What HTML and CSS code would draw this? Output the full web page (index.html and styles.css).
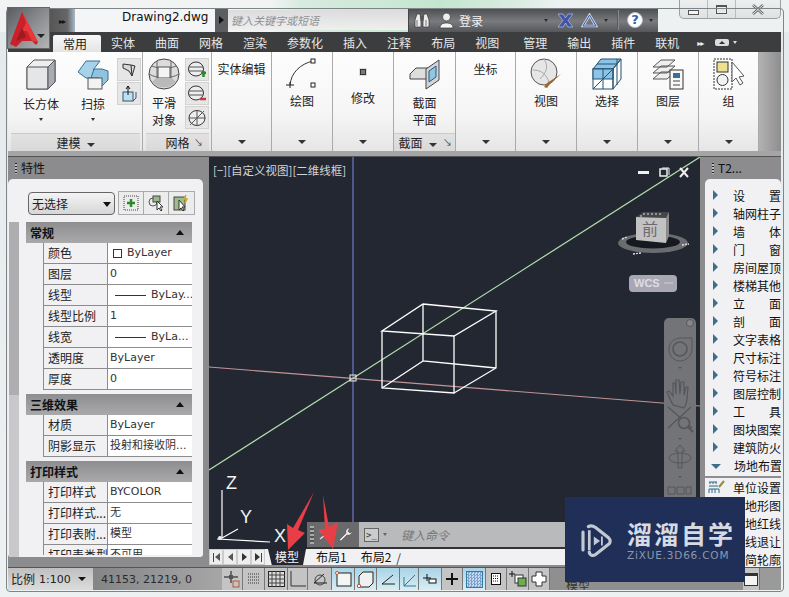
FILE: index.html
```html
<!DOCTYPE html>
<html lang="zh">
<head>
<meta charset="utf-8">
<title>Drawing2.dwg</title>
<link rel="stylesheet" href="styles.css">
</head>
<body>
<div class="window">
  <header class="titlebar">
    <div class="qat"><span class="dbl">▸▸</span></div>
    <div class="doc">Drawing2.dwg</div>
    <div class="expand"><span class="rtri"></span></div>
    <div class="search">键入关键字或短语</div>
    <div class="infobar">
      <svg class="ib-bino" width="16" height="17" viewBox="0 0 16 17"><path d="M1 15V8l2-6h3l1 6v7zM9 15V8l1-6h3l2 6v7z" fill="#ececec" stroke="#333" stroke-width=".7"/><path d="M3 8v6M12 8v6" stroke="#777"/><rect x="6.500" y="4" width="3" height="5" fill="#555"/></svg>
      <svg class="ib-user" width="15" height="17" viewBox="0 0 15 17"><circle cx="7.500" cy="5" r="4" fill="#eee" stroke="#333" stroke-width=".7"/><path d="M1 16c0-4 3-5 6.500-5s6.500 1 6.500 5z" fill="#f4f4f4" stroke="#333" stroke-width=".7"/></svg>
      <span class="login">登录</span>
      <span class="caret small-dark c1"></span>
      <svg class="ib-x" width="15" height="15" viewBox="0 0 15 15"><path d="M0 1h5l2.500 4L10 1h5l-5 6.500 5 6.500h-5L7.500 10 5 14H0l5-6.500z" fill="#3f54a8" stroke="#c8d0ee" stroke-width=".6"/></svg>
      <svg class="ib-a" width="17" height="15" viewBox="0 0 17 15"><path d="M8.500 2L15 13H2z" fill="none" stroke="#c9d4ea" stroke-width="2.600"/><path d="M8.500 2L15 13H2z" fill="none" stroke="#3c5aa8" stroke-width="1"/></svg>
      <span class="caret small-dark c2"></span>
      <span class="ib-sep"></span>
      <span class="help">?</span>
      <span class="caret small-dark c3"></span>
    </div>
    <div class="titlefill"></div>
    <div class="winbtns">
      <div class="winbtn"><span class="wb-min"></span></div>
      <div class="winbtn"><span class="wb-max"></span></div>
      <div class="winbtn wide"><svg width="12" height="11" viewBox="0 0 12 11"><path d="M1 1l10 9M11 1L1 10" stroke="#666" stroke-width="2.600"/><path d="M1 1l10 9M11 1L1 10" stroke="#eee" stroke-width="1"/></svg></div>
    </div>
  </header>

  <nav class="tabs">
    <span class="tab active">常用</span><span class="tab">实体</span><span class="tab">曲面</span><span class="tab">网格</span><span class="tab">渲染</span><span class="tab">参数化</span><span class="tab">插入</span><span class="tab">注释</span><span class="tab">布局</span><span class="tab">视图</span><span class="tab gap">管理</span><span class="tab">输出</span><span class="tab">插件</span><span class="tab">联机</span>
    <span class="tab-more">▸▸</span><span class="tab-mini"><i></i></span><span class="caret small-white"></span>
  </nav>

  <section class="ribbon">
    <div class="panel">
      <div class="pbody row-tools">
        <div class="tool">
          <svg width="32" height="32" viewBox="0 0 32 32"><path d="M2 9l7-7h21v22l-7 7H2z" fill="#eceef0" stroke="#555"/><path d="M2 9h21v22H2z" fill="#e4e6e8" stroke="#555"/><path d="M23 9l7-7v22l-7 7z" fill="#a9adb3" stroke="#555"/></svg>
          <span class="tlabel">长方体</span><span class="caret tiny"></span>
        </div>
        <div class="tool">
          <svg width="32" height="32" viewBox="0 0 32 32"><path d="M1 14l8-11h14l-7 9h3l-5 8H9z" fill="#a7d3ea" stroke="#3d6f8c"/><path d="M17 11h8l6 2v9l-6 6h-3v-8h-8z" fill="#8fc4e0" stroke="#3d6f8c"/><rect x="11" y="20" width="14" height="11" fill="#f2f2f2" stroke="#555"/></svg>
          <span class="tlabel">扫掠</span><span class="caret tiny"></span>
        </div>
        <div class="smalls">
          <div class="sbtn"><svg width="16" height="16" viewBox="0 0 16 16"><path d="M2 2l8 1 4 1-3 10-3-5-6-3z" fill="#d8d8d8" stroke="#333"/><path d="M10 3l1 11" stroke="#333"/></svg></div>
          <div class="sbtn"><svg width="18" height="18" viewBox="0 0 18 18"><rect x="3" y="7" width="10" height="9" fill="#bfe0ef" stroke="#357"/><path d="M8 1v9M6 4l2-3 2 3" stroke="#111" fill="none"/><path d="M13 16l3-3V7" stroke="#357" fill="none"/></svg></div>
        </div>
      </div>
      <div class="pfoot">建模<span class="caret foot"></span></div>
    </div>

    <div class="panel">
      <div class="pbody row-tools mesh">
        <div class="tool narrow">
          <svg width="32" height="32" viewBox="0 0 32 32"><circle cx="16" cy="16" r="15" fill="#dcdcdc" stroke="#444"/><path d="M1 16c8 5 22 5 30 0M9 3v22M23 3v22M4 8c7 3 17 3 24 0" fill="none" stroke="#666"/><rect x="10" y="9" width="12" height="11" fill="#f4f4f4" stroke="#555"/><path d="M4 24c6 7 18 7 24 0l-4-4H8z" fill="#b9b9b9"/></svg>
          <span class="tlabel two">平滑</span><span class="tlabel two">对象</span>
        </div>
        <div class="smalls three">
          <div class="sbtn"><svg width="20" height="20" viewBox="0 0 20 20"><ellipse cx="9" cy="9" rx="7.500" ry="7" fill="#eee" stroke="#333"/><path d="M2 7h14M2 11h14" stroke="#555"/><path d="M14 13h5M16.500 11v6" stroke="#2a8a2a" stroke-width="2.500"/></svg></div>
          <div class="sbtn"><svg width="20" height="20" viewBox="0 0 20 20"><ellipse cx="9" cy="9" rx="7.500" ry="7" fill="#eee" stroke="#333"/><path d="M2 7h14M2 11h14" stroke="#555"/><path d="M13 15h6" stroke="#c43a3a" stroke-width="2.500"/></svg></div>
          <div class="sbtn"><svg width="20" height="20" viewBox="0 0 20 20"><ellipse cx="10" cy="10" rx="8" ry="7.500" fill="#eee" stroke="#333"/><path d="M3 17L17 3M2 10h16M10 2v16" stroke="#555"/></svg></div>
        </div>
      </div>
      <div class="pfoot">网格<span class="launch">↘</span></div>
    </div>

    <div class="panel col"><span class="toptitle">实体编辑</span><span class="caret bottom"></span></div>

    <div class="panel col">
      <svg class="bigicon" width="34" height="32" viewBox="0 0 34 32"><path d="M5 27C6 15 15 6 28 3" fill="none" stroke="#333"/><rect x="26" y="1" width="4" height="4" fill="#fff" stroke="#222"/><rect x="26" y="25" width="4" height="4" fill="#fff" stroke="#222"/><path d="M1 27h8M5 24v6" stroke="#222"/></svg>
      <span class="plabel">绘图</span><span class="caret bottom"></span>
    </div>

    <div class="panel col">
      <span class="dot"></span>
      <span class="plabel">修改</span><span class="caret bottom"></span>
    </div>

    <div class="panel col framed">
      <svg class="bigicon" width="32" height="32" viewBox="0 0 32 32"><path d="M1 16l6-6h14v11H1z" fill="#ddd" stroke="#444"/><path d="M17 11l13-9v20l-13 9z" fill="#cfd6dc" stroke="#444"/><path d="M20 13l7-5v11l-7 5z" fill="#8fc6e0" stroke="#357"/></svg>
      <span class="tlabel two">截面</span><span class="tlabel two">平面</span>
      <div class="pfoot sec">截面<span class="caret foot"></span><span class="launch">↘</span></div>
    </div>

    <div class="panel col"><span class="toptitle">坐标</span><span class="caret bottom"></span></div>

    <div class="panel col">
      <svg class="bigicon" width="32" height="32" viewBox="0 0 32 32"><circle cx="14" cy="14" r="13" fill="#e6e6e6" stroke="#555"/><path d="M3 12c8 0 14 4 16 13M14 1c4 6 4 12-4 20" fill="none" stroke="#aaa"/><path d="M31 16L20 26l-3 4-3-1 3-4z" fill="#9b6a32"/></svg>
      <span class="plabel">视图</span><span class="caret bottom"></span>
    </div>

    <div class="panel col">
      <svg class="bigicon" width="30" height="32" viewBox="0 0 30 32"><path d="M1 11L9 1h20L21 11z" fill="#8cc4e8" stroke="#24506e"/><rect x="1" y="11" width="20" height="20" fill="#fff" stroke="#24506e"/><rect x="1" y="11" width="20" height="10" fill="#8cc4e8" stroke="#24506e"/><path d="M21 11l8-10v20l-8 10zM11 11v20M1 31l20-20M5 6h20M25 1v26" fill="none" stroke="#24506e"/></svg>
      <span class="plabel">选择</span><span class="caret bottom"></span>
    </div>

    <div class="panel col">
      <svg class="bigicon" width="32" height="32" viewBox="0 0 32 32"><path d="M1 9l8-7h14l-8 7zM1 15l8-7h14l-8 7zM1 21l8-7h14l-8 7z" fill="#eee" stroke="#555"/><rect x="18" y="12" width="13" height="19" fill="#f8f8f8" stroke="#333"/><rect x="21" y="15" width="7" height="5" fill="#3a6c9c"/><path d="M21 23h7M21 27h7" stroke="#444"/></svg>
      <span class="plabel">图层</span><span class="caret bottom"></span>
    </div>

    <div class="panel col">
      <svg class="bigicon" width="32" height="32" viewBox="0 0 32 32"><rect x="1" y="1" width="18" height="30" fill="none" stroke="#333" stroke-dasharray="2 1"/><rect x="4" y="4" width="11" height="10" fill="#efe08f" stroke="#333"/><circle cx="9.500" cy="22" r="5.500" fill="#f2f2f2" stroke="#333"/><path d="M19 4v20l4-4 4 7 3-2-4-6 5-1z" fill="#fff" stroke="#555"/></svg>
      <span class="plabel">组</span><span class="caret bottom"></span>
    </div>
    <div class="ribbon-rest"></div>
  </section>
  <div class="strip"></div>

  <main class="workspace">
    <aside class="side left">
      <div class="side-title"><span class="grip"></span>特性</div>
      <div class="side-body">
        <div class="selrow">
          <div class="select">无选择<span class="caret sel"></span></div>
          <div class="selbtns">
            <div class="selbtn"><svg width="16" height="16" viewBox="0 0 16 16"><rect x="1" y="1" width="14" height="14" fill="none" stroke="#444" stroke-dasharray="1 1"/><path d="M8 4v8M4 8h8" stroke="#2a8a2a" stroke-width="2.500"/></svg></div>
            <div class="selbtn"><svg width="18" height="18" viewBox="0 0 18 18"><circle cx="6" cy="8" r="4" fill="none" stroke="#555"/><rect x="6" y="2" width="7" height="6" fill="#97b78f" stroke="#444"/><path d="M10 7v9l2-2 2 3 1-1-2-3h3z" fill="#fff" stroke="#333"/></svg></div>
            <div class="selbtn"><svg width="18" height="18" viewBox="0 0 18 18"><rect x="1" y="3" width="11" height="13" fill="#9dbc8e" stroke="#444"/><path d="M6 6v10l2-2 2 3 1-1-2-3h3z" fill="#fff" stroke="#333"/><path d="M13 1l-2 4h3l-2 4" stroke="#d4a62a" fill="none" stroke-width="1.500"/></svg></div>
          </div>
        </div>
        <div class="propwrap">
          <div class="scroll"><div class="scroll-thumb"></div></div>
          <div class="props">
            <div class="section">常规<span class="caret up"></span></div>
            <div class="prow"><span class="pk">颜色</span><span class="pv"><i class="swatch"></i>ByLayer</span></div>
            <div class="prow"><span class="pk">图层</span><span class="pv">0</span></div>
            <div class="prow"><span class="pk">线型</span><span class="pv"><i class="lline"></i>ByLay...</span></div>
            <div class="prow"><span class="pk">线型比例</span><span class="pv">1</span></div>
            <div class="prow"><span class="pk">线宽</span><span class="pv"><i class="lline"></i>ByLa...</span></div>
            <div class="prow"><span class="pk">透明度</span><span class="pv">ByLayer</span></div>
            <div class="prow"><span class="pk">厚度</span><span class="pv">0</span></div>
            <div class="section spaced">三维效果<span class="caret up"></span></div>
            <div class="prow"><span class="pk">材质</span><span class="pv">ByLayer</span></div>
            <div class="prow"><span class="pk">阴影显示</span><span class="pv">投射和接收阴...</span></div>
            <div class="section spaced">打印样式<span class="caret up"></span></div>
            <div class="prow"><span class="pk">打印样式</span><span class="pv">BYCOLOR</span></div>
            <div class="prow"><span class="pk">打印样式...</span><span class="pv">无</span></div>
            <div class="prow"><span class="pk">打印表附...</span><span class="pv">模型</span></div>
            <div class="prow"><span class="pk">打印表类型</span><span class="pv">不可用</span></div>
          </div>
        </div>
      </div>
    </aside>

    <div class="viewport">
      <div class="canvas">
        <svg class="drawing" width="491" height="392" viewBox="209 157 491 392">
          <path d="M353 157V549" stroke="#7179cc" stroke-width="1.200"/>
          <path d="M209 367L700 406" stroke="#c29496" stroke-width="1.200"/>
          <path d="M209 470L700 157" stroke="#b4e0ac" stroke-width="1.200"/>
          <rect x="350" y="375" width="6" height="6" fill="none" stroke="#f0f0f0"/>
          <g fill="none" stroke="#fff" stroke-width="1.300">
            <path d="M423 304L496 311L454 336L382 331Z"/>
            <path d="M382 331V388L454 393V336"/>
            <path d="M496 311V368L454 393M423 304V361L496 368M423 361L382 388"/>
          </g>
          <g fill="none" stroke="#fff" stroke-width="1.200">
            <path d="M222 490V538M217 539L270 542M222 538L238 529"/>
          </g>
          <circle cx="220" cy="538" r="2" fill="#f0f0f0"/>
          <g class="ucs"><text x="226" y="489">Z</text><text x="240" y="523">Y</text><text x="274" y="542">X</text></g>

          <g class="vp-ctrl">
            <rect x="638" y="171" width="11" height="3" fill="#f0f0f0"/>
            <rect x="660" y="169" width="7" height="7" fill="none" stroke="#f0f0f0" stroke-width="1.500"/>
            <path d="M662 168h7v7" fill="none" stroke="#f0f0f0"/>
            <path d="M680 168l8 9M688 168l-8 9" stroke="#f0f0f0" stroke-width="2"/>
          </g>

          <g class="cube">
            <ellipse cx="653" cy="243" rx="35" ry="10" fill="#6a6c70"/>
            <ellipse cx="653" cy="242" rx="27" ry="6.500" fill="#16191f"/>
            <path d="M636 217l7-5h26l-3 6z" fill="#45464a"/>
            <path d="M643 214h20M640 216h4" stroke="#ddd" stroke-dasharray="2 2"/>
            <path d="M636 217l30 1v25l-30-3z" fill="#c2c2c2"/>
            <path d="M666 218l3-6v24l-3 7z" fill="#8a8a8a"/>
            <text x="650" y="235">前</text>
            <path d="M622 239l5-2M682 245l7-1M633 254l8-1" stroke="#ddd" stroke-width="1.500" stroke-dasharray="2 1"/>
          </g>
          <rect x="629" y="275" width="48" height="17" rx="4" fill="#a8a7b3"/>
          <text class="wcs" x="634" y="287">WCS</text>
          <path d="M664 283h9" stroke="#d0d0d8"/>

          <g class="nav">
            <rect x="664" y="318" width="32" height="190" rx="5" fill="#727478"/>
            <circle cx="690" cy="323" r="3.500" fill="#85878b" stroke="#55575b"/>
            <path d="M669 349c0-7 6-11 12-11h11v10c0 8-6 13-12 13s-11-5-11-12z" fill="none" stroke="#54565a"/>
            <circle cx="680" cy="349" r="7" fill="none" stroke="#54565a" stroke-width="1.500"/>
            <path d="M678 367h4l-2 2z" fill="#54565a"/>
            <path d="M673 405c-2-4-5-10-6-13l2-1 4 5v-13h2l1 11v-14h3l1 14 1-12h3v13l2-8h2l-1 12c0 5-2 7-3 9z" fill="none" stroke="#54565a" stroke-width="1.200"/>
            <path d="M668 407l24 21M691 407l-23 21" stroke="#54565a" stroke-width="1.200"/>
            <circle cx="684" cy="423" r="5.500" fill="#727478" stroke="#54565a" stroke-width="1.500"/>
            <path d="M688 427l5 5" stroke="#54565a" stroke-width="2"/>
            <path d="M678 438h4l-2 2z" fill="#54565a"/>
            <path d="M680 445l-5 6h3v17h4v-17h3z" fill="none" stroke="#54565a"/>
            <ellipse cx="680" cy="458" rx="11" ry="5" fill="none" stroke="#54565a"/>
            <path d="M678 476h4l-2 2z" fill="#54565a"/>
            <path d="M668 487h7v7h-7zM677 487h7v7h-7zM686 487h5v7h-5z" fill="none" stroke="#54565a"/>
          </g>
        </svg>
        <span class="vp-label">[−][自定义视图][二维线框]</span>
        <div class="cmdline">
          <div class="cmd-tools">
            <span class="grip dark"></span>
            <svg width="13" height="10" viewBox="0 0 13 10"><path d="M1 1l5 4-5 4M7 1l5 4-5 4" fill="none" stroke="#ddd" stroke-width="1.500"/></svg>
            <svg width="15" height="15" viewBox="0 0 15 15"><path d="M2 13l7-7c-1-3 1-5 4-5l-2 3 2 2 2-2c0 3-2 5-5 4l-6 6z" fill="#e8e8e8" stroke="#333" stroke-width=".5"/></svg>
          </div>
          <div class="cmd-input">
            <span class="prompt">&gt;_</span><span class="caret cmd-caret"></span>
            <span class="cmd-text">键入命令</span>
          </div>
        </div>
      </div>
      <div class="layouts">
        <div class="navbtns"><span class="nb"><i class="bar"></i><i class="ltri"></i></span><span class="nb"><i class="ltri"></i></span><span class="nb"><i class="rtri dark"></i></span><span class="nb"><i class="rtri dark"></i><i class="bar"></i></span></div>
        <span class="ltab current">模型</span><span class="ltab">布局1</span><span class="ltab">布局2</span><span class="slash">/</span>
      </div>
    </div>

    <aside class="side right">
      <div class="side-title"><span class="grip"></span>T2...</div>
      <div class="side-body list">
        <div class="item"><i class="arrow"></i><span class="just"><b>设</b><b>置</b></span></div>
        <div class="item"><i class="arrow"></i><span class="just"><b>轴网柱子</b></span></div>
        <div class="item"><i class="arrow"></i><span class="just"><b>墙</b><b>体</b></span></div>
        <div class="item"><i class="arrow"></i><span class="just"><b>门</b><b>窗</b></span></div>
        <div class="item"><i class="arrow"></i><span class="just"><b>房间屋顶</b></span></div>
        <div class="item"><i class="arrow"></i><span class="just"><b>楼梯其他</b></span></div>
        <div class="item"><i class="arrow"></i><span class="just"><b>立</b><b>面</b></span></div>
        <div class="item"><i class="arrow"></i><span class="just"><b>剖</b><b>面</b></span></div>
        <div class="item"><i class="arrow"></i><span class="just"><b>文字表格</b></span></div>
        <div class="item"><i class="arrow"></i><span class="just"><b>尺寸标注</b></span></div>
        <div class="item"><i class="arrow"></i><span class="just"><b>符号标注</b></span></div>
        <div class="item"><i class="arrow"></i><span class="just"><b>图层控制</b></span></div>
        <div class="item"><i class="arrow"></i><span class="just"><b>工</b><b>具</b></span></div>
        <div class="item"><i class="arrow"></i><span class="just"><b>图块图案</b></span></div>
        <div class="item"><i class="arrow"></i><span class="just"><b>建筑防火</b></span></div>
        <div class="item open"><i class="arrow down"></i><span class="just"><b>场地布置</b></span></div>
        <div class="item first"><svg class="unit" width="18" height="14" viewBox="0 0 18 14"><path d="M1 6h9M1 13V9h10v4M4 9v4M7 9v4M1 2h8M2 4V2M5 4V2M8 4V2" stroke="#2a6a8a" fill="none"/><path d="M11 7l5-6" stroke="#9a8a3a" stroke-width="2"/></svg><span class="just"><b>单位设置</b></span></div>
        <div class="item"><span class="tail">地形图</span></div>
        <div class="item"><span class="tail">地红线</span></div>
        <div class="item"><span class="tail">线退让</span></div>
        <div class="item"><span class="tail">简轮廓</span></div>
      </div>
    </aside>
  </main>

  <footer class="statusbar">
    <div class="st-scale">比例 <span>1:100</span><span class="caret st-caret"></span></div>
    <div class="st-coords">41153, 21219, 0</div>
    <div class="st-btn w21"><svg width="18" height="18" viewBox="0 0 18 18"><path d="M1 7h14M8 1v12" stroke="#111"/><rect x="6" y="5" width="4" height="4" fill="#555"/><rect x="10" y="11" width="6" height="6" fill="none" stroke="#b5563a"/></svg></div>
    <div class="st-btn w22"><svg width="14" height="12" viewBox="0 0 14 12"><path d="M1 1h12M1 4h12M1 7h12M1 10h12" stroke="#333" stroke-dasharray="1 1"/></svg></div>
    <div class="st-btn w23"><svg width="17" height="16" viewBox="0 0 17 16"><rect x=".5" y=".5" width="16" height="15" fill="#ddd" stroke="#222"/><path d="M4 0v16M8 0v16M12 0v16M0 4h17M0 8h17M0 12h17" stroke="#444"/></svg></div>
    <div class="st-btn w20"><svg width="16" height="16" viewBox="0 0 16 16"><path d="M1 0v15h15" fill="none" stroke="#333"/></svg></div>
    <div class="st-btn w24"><svg width="16" height="14" viewBox="0 0 16 14"><circle cx="8" cy="8" r="5" fill="none" stroke="#444"/><path d="M2 11L12 2M2 11h13" stroke="#222"/></svg></div>
    <div class="st-btn on w23"><svg width="17" height="16" viewBox="0 0 17 16"><rect x="2" y="2" width="14" height="13" fill="#f4f4f4" stroke="#222"/><circle cx="2" cy="2" r="1.500" fill="#fff" stroke="#b5563a"/></svg></div>
    <div class="st-btn on w22"><svg width="17" height="17" viewBox="0 0 17 17"><path d="M2 5l4-4h10v11l-4 4H2z" fill="#f0f0f0" stroke="#222"/><circle cx="2" cy="15" r="1.700" fill="#fff" stroke="#b5563a"/></svg></div>
    <div class="st-btn on w23"><svg width="15" height="12" viewBox="0 0 15 12"><path d="M1 11L12 2M1 11h13" stroke="#222" fill="none"/></svg></div>
    <div class="st-btn on w19"><svg width="15" height="15" viewBox="0 0 15 15"><path d="M2 14L13 3M2 14h12M2 14V5" stroke="#2a7a9a" fill="none"/></svg></div>
    <div class="st-btn on w23"><svg width="14" height="10" viewBox="0 0 14 10"><path d="M4 0v7M0 4h8" stroke="#111"/><rect x="6" y="5" width="7" height="4" fill="#fff" stroke="#111"/></svg></div>
    <div class="st-btn w21"><svg width="14" height="14" viewBox="0 0 14 14"><path d="M7 1v12M1 7h12" stroke="#111" stroke-width="2"/></svg></div>
    <div class="st-btn on w23"><span class="hatch"></span></div>
    <div class="st-btn w21"><svg width="10" height="12" viewBox="0 0 10 12"><rect x=".5" y=".5" width="9" height="11" fill="#fff" stroke="#111"/><path d="M2 3h6M2 5.500h6M2 8h6" stroke="#111" stroke-dasharray="1 1"/></svg></div>
    <div class="st-btn w22"><svg width="18" height="16" viewBox="0 0 18 16"><path d="M3 0v6M0 3h6" stroke="#111"/><rect x="6" y="4" width="8" height="8" fill="#fff" stroke="#333"/><rect x="9" y="7" width="8" height="8" fill="#6cb04c" stroke="#333"/></svg></div>
    <div class="st-btn w21"><svg width="16" height="16" viewBox="0 0 16 16"><path d="M5 1h6v4h4v6h-4v4H5v-4H1V5h4z" fill="#fff" stroke="#333"/></svg></div>
    <div class="st-fill"><span class="st-model">模型</span></div>
    <div class="st-btn w17"><span class="winicon"></span></div>
    <div class="st-grip"></div>
  </footer>

  <div class="appbtn">
    <svg width="41" height="40" viewBox="0 0 41 40"><path d="M14 4L2 36l6 3 6-6h10l4 4 2-3z" fill="#c9202a"/><path d="M14 4l16 30-6-1-5-10-5 0 4-8z" fill="#e8383c"/><path d="M14 20l-6 13 10-4z" fill="#a01820"/><path d="M29 26h8l-4 4z" fill="#222"/></svg>
  </div>

  <div class="arrows">
    <svg width="60" height="62" viewBox="285 490 60 62"><path d="M314 492L298 530L305 533L288 550L287 524L293 528ZM323 495L329 527L338 522L333 549L318 529L325 529Z" fill="#e83f46"/></svg>
  </div>

  <div class="watermark">
    <svg width="33" height="36" viewBox="0 0 36 40"><path d="M3 10v20" stroke="#c3c9d4" stroke-width="3.500" stroke-linecap="round"/><path d="M9 4c3-2 5-1 8 1l14 11c3 3 3 6 0 8L17 35c-3 2-7 1-7-3" fill="none" stroke="#c3c9d4" stroke-width="3.500" stroke-linecap="round"/><path d="M10 30V8" stroke="#c3c9d4" stroke-width="3"/><path d="M15 15l7 5-7 5z" fill="#c3c9d4"/><path d="M24 15v10" stroke="#c3c9d4" stroke-width="2"/></svg>
    <div class="wm-text">
      <div class="wm-cn">溜溜自学</div>
      <div class="wm-en">ZiXUE.3D66.COM</div>
    </div>
  </div>
</div>
</body>
</html>
```

FILE: styles.css
```css
* { box-sizing: border-box; }
html, body { margin: 0; padding: 0; }
body {
  width: 789px; height: 597px; overflow: hidden;
  font-family: "Noto Sans CJK SC", "DejaVu Sans", sans-serif;
  font-size: 12px; color: #222;
  background: #dfe6e8;
}
.window {
  position: relative; width: 789px; height: 597px; overflow: hidden;
  display: flex; flex-direction: column;
  padding-bottom: 7px;
  background: linear-gradient(#e4eaec, #eef1f2);
}
.window::before {
  content: ""; position: absolute; left: 6px; top: 8px; bottom: 5px; right: 5px;
  border: 1px solid #7d8588; border-radius: 4px; pointer-events: none;
}

/* App button */
.appbtn {
  position: absolute; left: 8px; top: 8px; width: 41px; height: 40px; line-height: 0;
  background: linear-gradient(135deg, #5c5d60, #8f9093 55%, #b4b4b6);
  box-shadow: 0 0 0 1px #666;
}

/* Title bar */
.titlebar {
  height: 32px; flex: none; display: flex; padding: 8px 0 0 49px;
  background: linear-gradient(90deg, #f2f4f4 0 270px, #d8ebdf 300px, #c4e6d0 440px, #d8ebdf 510px, #eef1f1 560px);
}
.qat {
  width: 26px; background: linear-gradient(90deg, #555 0, #666 70%, #a8b8c8);
  color: #111; display: flex; align-items: center; justify-content: center;
}
.dbl { font-size: 8px; letter-spacing: -1px; color: #111; }
.doc {
  width: 140px; padding: 2px 0 0 47px; line-height: 15px;
  font-family: "DejaVu Sans", sans-serif; font-size: 12px; color: #111; background: #f4f5f6;
}
.expand { width: 13px; background: #5c5d60; display: flex; align-items: center; justify-content: center; }
.rtri { width: 0; height: 0; border: 4px solid transparent; border-left: 5px solid #111; border-right: 0; display: block; }
.search {
  width: 180px; height: 20px; margin-top: 2px; padding-left: 3px; line-height: 20px;
  font-size: 11px; font-style: italic; color: #909094; background: linear-gradient(#dcdcdc, #efefef);
}
.infobar {
  width: 250px; display: flex; align-items: center; padding-left: 5px; color: #eee;
  background: linear-gradient(#4a4b4e, #7a7b7e 55%, #55565a);
  border-left: 1px solid #444;
}
.ib-bino { margin-right: 9px; }
.login { margin-left: 5px; font-size: 12px; color: #f2f2f2; }
.c1 { margin-left: 61px; margin-right: 10px; }
.ib-a { margin: 0 6px 0 8px; }
.ib-sep { width: 1px; height: 20px; background: #5a5a5c; margin: 0 9px 0 9px; box-shadow: 1px 0 #888; }
.help {
  width: 16px; height: 16px; border-radius: 50%; background: #fff; border: 1px solid #bbb;
  color: #2f5ea8; font: bold 13px/14px "DejaVu Sans", sans-serif; text-align: center;
}
.c3 { margin-left: 6px; }
.titlefill { flex: 1; }
.winbtns {
  display: flex; height: 19px; margin: -8px 8px 0 0; width: 102px;
  border: 1px solid #9aa0a2; border-top: 0; border-radius: 0 0 5px 5px;
  background: linear-gradient(#eef0f0, #dfe2e2);
}
.winbtn { width: 28px; border-right: 1px solid #bbb; display: flex; align-items: center; justify-content: center; }
.winbtn.wide { flex: 1; border: 0; }
.wb-min { width: 11px; height: 5px; border: 1px solid #555; margin-top: 6px; background: #f4f4f4; }
.wb-max { width: 11px; height: 9px; border: 1px solid #555; border-top-width: 2px; box-shadow: inset 0 0 0 1px #eee; }

/* Carets */
.caret { display: inline-block; width: 0; height: 0; border-style: solid; border-color: #333 transparent transparent; border-width: 4px 4px 0; }
.caret.tiny { border-width: 3px 2.5px 0; margin-top: 5px; }
.caret.small-dark { border-width: 3px 2.5px 0; border-top-color: #2d2d2f; }
.caret.small-white { border-width: 3px 2.5px 0; border-top-color: #ddd; margin-left: 4px; }
.caret.foot { margin-left: 6px; vertical-align: middle; }
.caret.bottom { position: absolute; left: 50%; margin-left: -4px; bottom: 7px; }
.caret.up { border-width: 0 4px 5px; border-color: transparent transparent #111; margin-left: auto; margin-right: 8px; }

/* Tabs */
.tabs {
  height: 20px; flex: none; margin: 0 8px 0 8px; padding-left: 45px; display: flex; align-items: center;
  background: #3c3d3f; color: #e6e6e6;
}
.tab { padding: 0 10px; height: 20px; line-height: 22px; font-size: 12px; }
.tab.active {
  padding: 0 14px 0 10px; margin-top: 3px; height: 17px; line-height: 17px; color: #222;
  background: linear-gradient(#f8f8f8, #e4e4e4); border-radius: 2px 2px 0 0;
}
.tab.gap { margin-left: 4px; }
.tab-more { margin-left: 8px; font-size: 8px; letter-spacing: -1px; color: #eee; }
.tab-mini { margin-left: 12px; width: 14px; height: 7px; background: #ddd; border-radius: 2px; display: flex; align-items: center; justify-content: center; }
.tab-mini i { width: 0; height: 0; border: 3px solid transparent; border-top: 0; border-bottom: 3px solid #333; }

/* Ribbon */
.ribbon {
  height: 99px; flex: none; margin: 0 8px; display: grid;
  grid-template-columns: 135px 69px 60px 61px 61px 62px 60px 61px 61px 61px 60px 1fr;
  background: #f4f4f4;
}
.panel {
  position: relative; display: flex; flex-direction: column;
  border-right: 1px solid #aaa;
  background: linear-gradient(#fdfdfd 0, #f6f6f6 60%, #e6e6e6 100%);
}
.panel.col { align-items: center; }
.pbody { flex: 1; }
.row-tools { display: flex; padding: 6px 0 0 7px; min-height: 0; }
.tool { width: 52px; display: flex; flex-direction: column; align-items: center; }
.tool.narrow { width: 42px; }
.mesh { padding-left: 0; }
.tlabel { font-size: 12px; line-height: 18px; margin-top: 5px; color: #222; }
.tlabel.two { margin-top: 0; line-height: 17px; }
.tool .tlabel.two:first-of-type, .panel.col .tlabel.two:first-of-type { margin-top: 4px; }
.smalls { display: flex; flex-direction: column; gap: 1px; margin-left: -2px; padding-top: 0; }
.three { margin-left: 0; }
.sbtn {
  width: 24px; height: 23px; display: flex; align-items: center; justify-content: center;
  background: #e6e6e6; border: 1px solid #d2d2d2;
}
.pfoot {
  height: 18px; flex: none; text-align: center; line-height: 18px; font-size: 12px; color: #222; margin: 0 2px 0 3px;
  background: linear-gradient(#e2e2e2, #d9d9d9); border-top: 1px solid #ccc;
}
.launch { position: absolute; right: 8px; font-size: 9px; color: #444; }
.pfoot.sec { position: absolute; left: 0; right: 0; bottom: 0; margin: 0; padding-right: 14px; }
.pfoot.sec .launch { right: 3px; }
.toptitle { margin-top: 7px; line-height: 20px; font-size: 12px; }
.bigicon { margin-top: 6px; flex: none; }
.plabel { line-height: 18px; font-size: 12px; margin-top: 2px; }
.dot { width: 6px; height: 6px; margin: 17px 0 12px; border: 1px solid #333; background: #777; box-shadow: 0 0 0 1px #ddd; }
.ribbon-rest { background: linear-gradient(90deg, #b2b2b2, #8e8e8e); }
.strip { height: 6px; flex: none; margin: 0 8px; background: #a5a5a7; border-bottom: 1px solid #555; }

/* Workspace */
.workspace { flex: 1; min-height: 0; margin: 0 8px 0 8px; display: flex; background: #8c8c8e; }
.side { display: flex; flex-direction: column; background: #8c8c8e; }
.side.left { width: 198px; padding-right: 3px; padding-bottom: 10px; margin-right: 3px; }
.side.right { width: 76px; margin-left: 5px; }
.side-title { height: 22px; flex: none; line-height: 24px; padding-left: 7px; display: flex; align-items: center; font-size: 12px; color: #111; }
.grip { width: 2px; height: 11px; margin-right: 4px; background: repeating-linear-gradient(#222 0 1px, #bbb 1px 3px); }
.grip.dark { width: 4px; height: 18px; background: repeating-linear-gradient(#aaa 0 2px, #555 2px 4px); margin: 0; }
.side-body { flex: 1; min-height: 0; overflow: hidden; background: #f1f1f3; border-radius: 5px 5px 3px 3px; }

.selrow { display: flex; padding: 12px 0 0 20px; align-items: center; }
.select {
  width: 87px; height: 23px; padding-left: 3px; line-height: 22px; position: relative;
  border: 1px solid #666; border-radius: 4px; background: linear-gradient(#f4f4f4, #d6d6d6);
}
.caret.sel { position: absolute; right: 3px; top: 9px; border-width: 5px 4px 0; border-top-color: #111; }
.selbtns { display: flex; margin-left: 3px; border: 1px solid #aaa; }
.selbtn { width: 25px; height: 22px; display: flex; align-items: center; justify-content: center; border-right: 1px solid #aaa; background: #ececec; }
.selbtn:last-child { border: 0; }
.propwrap { display: flex; padding: 7px 0 0 1px; }
.scroll { width: 10px; margin-right: 7px; height: 340px; background: #c8c8ca; }
.scroll-thumb { height: 173px; background: #aeaeb0; }
.props { width: 166px; overflow: hidden; height: 333px; }
.section {
  height: 21px; display: flex; align-items: center; padding-left: 4px; font-weight: 700; color: #111;
  background: linear-gradient(#8e8e90, #a9a9ab);
}
.section.spaced { margin-top: 4px; }
.prow { height: 21px; display: grid; grid-template-columns: 64px 84px; margin-left: 17px; border-left: 1px solid #8c8c8c; border-bottom: 1px solid #8c8c8c; }
.pk { padding-left: 4px; line-height: 20px; white-space: nowrap; overflow: hidden; background: #f1f1f3; border-right: 1px solid #8c8c8c; }
.pv {
  padding-left: 2px; line-height: 20px; white-space: nowrap; overflow: hidden; background: #fff;
  font-family: "DejaVu Sans", "Noto Sans CJK SC", sans-serif; font-size: 11px; display: flex; align-items: center; color: #333;
}
.swatch { width: 9px; height: 9px; border: 1px solid #333; background: #fff; margin: 0 5px 0 3px; }
.lline { width: 31px; height: 1px; background: #333; margin: 0 5px; flex: none; }

/* Viewport */
.viewport { width: 491px; display: flex; flex-direction: column; padding-bottom: 2px; }
.canvas { flex: 1; position: relative; background: #222731; overflow: hidden; }
.drawing { display: block; }
.ucs text { font: 18px "Liberation Sans", sans-serif; fill: #f2f2f2; }
.cube text { font: 16px "Noto Sans CJK SC", sans-serif; fill: #6a6a70; text-anchor: middle; }
.wcs { font: bold 11px "Liberation Sans", sans-serif; fill: #dedde6; }
.vp-label { position: absolute; left: 4px; top: 5px; font-size: 11.500px; line-height: 16px; color: #d4d4d8; }
.cmdline { position: absolute; left: 98px; right: 0; bottom: 0; height: 27px; display: flex; border-bottom: 2px solid #333; }
.cmd-tools { width: 52px; display: flex; align-items: center; gap: 5px; padding-left: 3px; background: #6a6a6c; }
.cmd-input { flex: 1; display: flex; align-items: center; padding-left: 5px; background: #b9babc; }
.prompt { width: 15px; height: 14px; border: 1px solid #666; font: 9px/12px "DejaVu Sans Mono", monospace; text-align: center; color: #333; background: #ccc; }
.cmd-caret { border-width: 3px 2.5px 0; border-top-color: #666; margin-left: 4px; }
.cmd-text { margin-left: 14px; font-size: 12px; font-style: italic; color: #777; }
.layouts { height: 16px; flex: none; display: flex; align-items: center; background: #f1f1f3; color: #111; font-size: 12px; overflow: hidden; }
.navbtns { display: flex; width: 58px; flex: none; }
.nb { width: 14px; height: 16px; display: flex; align-items: center; justify-content: center; gap: 1px; border: 1px solid #ccc; background: #eee; }
.bar { width: 1px; height: 9px; background: #444; }
.ltri { width: 0; height: 0; border: 4px solid transparent; border-right: 5px solid #555; border-left: 0; }
.rtri.dark { border-left-color: #333; }
.ltab { padding: 0 5px 0 9px; line-height: 16px; }
.ltab.current { background: #222731; color: #f4f4f4; padding: 0 7px; margin-left: 1px; margin-right: 1px; clip-path: polygon(0 0, 100% 0, 92% 100%, 10% 100%); }
.slash { color: #333; }

/* Right list */
.list { padding-top: 7px; }
.item { height: 18px; display: flex; align-items: center; white-space: nowrap; }
.arrow { width: 0; height: 0; margin: 0 15px 0 8px; border: 5px solid transparent; border-left: 5px solid #3e6f8a; border-right: 0; flex: none; }
.arrow.down { margin: 2px 13px 0 6px; border: 5px solid transparent; border-top: 5px solid #3e6f8a; border-bottom: 0; }
.tail { margin-left: auto; color: #111; }
.just { width: 48px; flex: none; display: flex; justify-content: space-between; color: #111; }
.just b { font-weight: 400; }
.item.open { margin-bottom: 2px; }
.item.first { border-top: 2px solid #8e8e90; height: 20px; }
.unit { margin: 0 7px 0 3px; flex: none; }

/* Status bar */
.statusbar { height: 23px; flex: none; margin: 0 8px; display: flex; align-items: center; background: #9c9c9c; border-top: 1px solid #555; }
.st-scale { width: 85px; height: 100%; padding-left: 3px; line-height: 22px; font-size: 12px; color: #222; background: linear-gradient(#bfbfbf, #dcdcdc); display: flex; gap: 4px; align-items: center; flex: none; }
.st-scale span { font: 11px "DejaVu Sans", sans-serif; }
.caret.st-caret { border-top-color: #111; margin-left: 3px; }
.st-coords { width: 129px; flex: none; height: 100%; padding-left: 8px; font: 11px/24px "DejaVu Sans", sans-serif; color: #2a2a2a; background: linear-gradient(90deg, #858585, #a6a6a6); }
.st-btn { flex: none; height: 100%; display: flex; align-items: center; justify-content: center; border-right: 1px solid #777; background: #c4c4c4; }
.st-btn.on { background: linear-gradient(#a9d4e6, #d8edf4); }
.w17 { width: 17px; } .w19 { width: 19px; } .w20 { width: 20px; } .w21 { width: 21px; } .w22 { width: 22px; } .w23 { width: 23px; } .w24 { width: 24px; }
.hatch { width: 17px; height: 17px; border: 1px solid #2f7ea0; background: repeating-conic-gradient(#7ea4cf 0 25%, #c7d9ee 0 50%) 0 0 / 3px 3px; }
.st-fill { flex: 1; height: 100%; padding-left: 16px; line-height: 34px; overflow: hidden; background: #8f8f8f; color: #333; }
.winicon { width: 14px; height: 13px; border: 1px solid #333; border-top-width: 3px; background: #f4f4f4; }
.st-grip { width: 21px; height: 100%; flex: none; background: #9a9a9a; }

/* Overlays */
.arrows { position: absolute; left: 285px; top: 490px; line-height: 0; }
.watermark {
  position: absolute; left: 565px; top: 497px; width: 180px; height: 85px;
  display: flex; align-items: center; gap: 14px; padding: 2px 0 0 15px; background: #1f2f58;
}
.wm-text { display: flex; flex-direction: column; gap: 2px; }
.wm-cn { font-size: 25px; line-height: 28px; font-weight: 700; letter-spacing: 2px; color: #d6dae3; white-space: nowrap; }
.wm-en { font: 10.500px/13px "DejaVu Sans", sans-serif; letter-spacing: .8px; color: #8e98ad; white-space: nowrap; }
```
